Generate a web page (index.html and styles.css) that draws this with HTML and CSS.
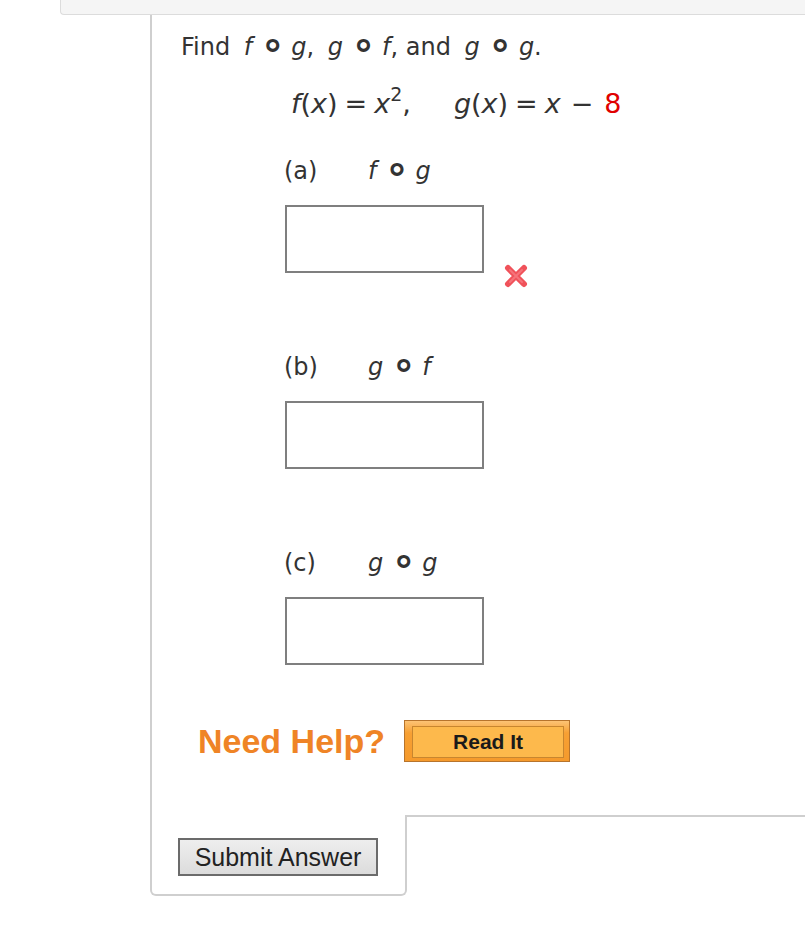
FILE: index.html
```html
<!DOCTYPE html>
<html lang="en">
<head>
    <meta charset="UTF-8">
    <title>Composite Functions</title>
    <link rel="stylesheet" href="styles.css">
</head>
<body>

<div class="top-bar"></div>

<div class="panel">
    <div class="question">
        <p class="lead">Find <span class="math"><i>f</i><span class="op">∘</span><i>g</i></span>, <span class="math"><i>g</i><span class="op">∘</span><i>f</i></span>, and <span class="math"><i>g</i><span class="op">∘</span><i>g</i></span>.</p>
        <p class="given"><i>f</i>(<i>x</i>)<span class="rel">=</span><i>x</i><sup>2</sup>,<span class="sep"></span><i>g</i>(<i>x</i>)<span class="rel">=</span><i>x</i><span class="bin">&minus;</span><span class="red">8</span></p>

        <div class="part">
            <div class="part-label"><span class="letter">(a)</span><span class="math"><i>f</i><span class="op">∘</span><i>g</i></span></div>
            <div class="answer-row">
                <input type="text" class="answer">
                <svg class="wrong" width="26" height="26" viewBox="0 0 26 26">
                    <path d="M5 5 L21 21 M21 5 L5 21" stroke="#f0525a" stroke-width="6" stroke-linecap="round"/>
                    <path d="M7 7 L19 19 M19 7 L7 19" stroke="#f6737a" stroke-width="2" stroke-linecap="round"/>
                </svg>
            </div>
        </div>

        <div class="part">
            <div class="part-label"><span class="letter">(b)</span><span class="math"><i>g</i><span class="op">∘</span><i>f</i></span></div>
            <div class="answer-row">
                <input type="text" class="answer">
            </div>
        </div>

        <div class="part">
            <div class="part-label"><span class="letter">(c)</span><span class="math"><i>g</i><span class="op">∘</span><i>g</i></span></div>
            <div class="answer-row">
                <input type="text" class="answer">
            </div>
        </div>

        <div class="help">
            <span class="help-text">Need Help?</span>
            <button class="read-it"><span>Read It</span></button>
        </div>
    </div>

    <div class="footer">
        <div class="submit-tab">
            <button class="submit-btn">Submit Answer</button>
        </div>
        <div class="footer-rest"></div>
    </div>
</div>

</body>
</html>
```

FILE: styles.css
```css
body {
    margin: 0;
    font-family: "DejaVu Sans", Verdana, sans-serif;
    color: #333;
    background: #fff;
}

.top-bar {
    margin-left: 60px;
    height: 14px;
    background: #f5f5f5;
    border-left: 1px solid #dcdcdc;
    border-bottom: 1px solid #dcdcdc;
    border-bottom-left-radius: 4px;
}

.panel {
    margin-left: 150px;
}

.question {
    border-left: 2px solid #cfcfcf;
    padding: 17px 0 53px 29px;
}

.lead {
    margin: 0;
    font-size: 24px;
    line-height: 30px;
}

.lead .math {
    margin-left: 6px;
}

.op {
    font-style: normal;
    font-weight: bold;
    font-size: 40px;
    line-height: 0;
    margin: 0 6px 0 8px;
    vertical-align: -3px;
}

.given {
    margin: 27px 0 0 110px;
    font-size: 27px;
    line-height: 30px;
}

.given sup {
    font-size: 19px;
    line-height: 0;
    vertical-align: 12px;
}

.rel {
    margin: 0 7px;
}

.bin {
    margin: 0 11px 0 10px;
}

.sep {
    display: inline-block;
    width: 43px;
}

.red {
    color: #e00000;
}

.part {
    margin-left: 103px;
    margin-top: 37px;
}

.part + .part {
    margin-top: 79px;
}

.part-label {
    display: flex;
    font-size: 24px;
    line-height: 30px;
}

.letter {
    width: 84px;
}

.answer-row {
    display: flex;
    align-items: flex-start;
    margin-top: 19px;
}

.answer {
    box-sizing: border-box;
    width: 199px;
    height: 68px;
    margin: 0 0 0 1px;
    border: 2px solid #7f7f7f;
    background: #fff;
}

.wrong {
    margin: 58px 0 -16px 19px;
}

.help {
    display: flex;
    align-items: center;
    gap: 19px;
    margin: 55px 0 0 17px;
}

.help-text {
    font-family: "Liberation Sans", Arial, sans-serif;
    font-weight: bold;
    font-size: 34px;
    color: #ef8426;
}

.read-it {
    box-sizing: border-box;
    width: 166px;
    height: 42px;
    padding: 5px 5px 3px 7px;
    border: 1px solid #b7742c;
    background: linear-gradient(#fcc375, #f7a033 30%, #f59a2c);
    cursor: pointer;
}

.read-it span {
    display: block;
    height: 100%;
    box-sizing: border-box;
    border: 1px solid #c8862f;
    background: #fdb94c;
    font-family: "Liberation Sans", Arial, sans-serif;
    font-weight: bold;
    font-size: 21px;
    line-height: 29px;
    color: #1a1a1a;
}

.footer {
    display: flex;
}

.submit-tab {
    box-sizing: border-box;
    width: 257px;
    padding: 23px 0 18px 26px;
    border: 2px solid #cfcfcf;
    border-top: none;
    border-radius: 0 0 6px 6px;
}

.submit-btn {
    box-sizing: border-box;
    width: 200px;
    height: 38px;
    padding: 0;
    border: 2px solid #6b6b6b;
    background: linear-gradient(#eeeeee, #dcdcdc);
    font-family: "Liberation Sans", Arial, sans-serif;
    font-size: 25px;
    color: #222;
    cursor: pointer;
}

.footer-rest {
    flex: 1;
    border-top: 2px solid #cfcfcf;
}
```
